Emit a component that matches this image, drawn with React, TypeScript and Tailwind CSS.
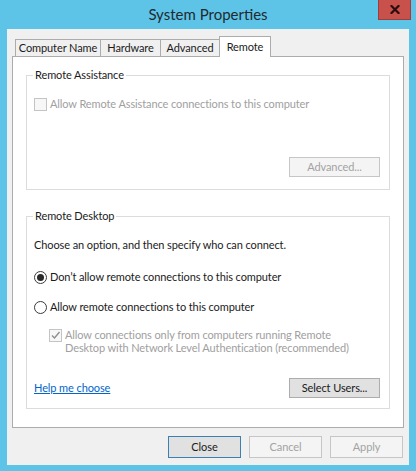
import React from "react";

function CheckBox({ checked = false }: { checked?: boolean }) {
  return (
    <span className="flex h-[13px] w-[13px] shrink-0 items-center justify-center border border-[#c4c4c4] bg-[#f7f7f7]">
      {checked && (
        <svg width="11" height="11" viewBox="0 0 11 11">
          <polyline points="2,5.5 4.5,8 9.5,2" fill="none" stroke="#8e8e8e" strokeWidth="1.4" />
        </svg>
      )}
    </span>
  );
}

function Radio({ checked = false }: { checked?: boolean }) {
  return (
    <span className="flex h-[13px] w-[13px] shrink-0 items-center justify-center rounded-full border border-[#3a3a3a] bg-white">
      {checked && <span className="h-[7px] w-[7px] rounded-full bg-[#2a2a2a]" />}
    </span>
  );
}

function Tab({ label, active = false, w }: { label: string; active?: boolean; w: string }) {
  if (active) {
    return (
      <div
        className={`relative z-10 -mb-px flex h-[21px] items-start justify-center border border-b-0 border-[#acacac] bg-white pt-[3px] ${w}`}
      >
        {label}
      </div>
    );
  }
  return (
    <div
      className={`-mr-px flex h-[17px] items-center justify-center border border-b-0 border-[#acacac] bg-[#f0f0f0] ${w}`}
    >
      {label}
    </div>
  );
}

export default function App() {
  return (
    <div className="flex h-[471px] w-[416px] flex-col whitespace-nowrap bg-[#5ec4e7] font-[Lato,'Liberation_Sans',sans-serif] text-[11px] leading-[14px] tracking-[-0.1px] text-[#1b1b1b]">
      {/* caption bar */}
      <div className="relative flex h-[29px] shrink-0 items-center justify-center pb-[1px] text-[15px] tracking-normal text-[#1f2a30]">
        System Properties
        <div className="absolute right-[5px] top-0 flex h-[20px] w-[33px] items-center justify-center border border-t-0 border-[#9c3f3b] bg-[#c9514c]">
          <svg width="10" height="9" viewBox="0 0 10 9">
            <path d="M1.5 1 L8.5 8 M8.5 1 L1.5 8" stroke="#2a0d0c" strokeWidth="2.2" strokeLinecap="square" />
          </svg>
        </div>
      </div>

      {/* client area */}
      <div className="mx-[7px] flex h-[436px] flex-col bg-[#f0f0f0] pt-[7px]">
        {/* tab strip */}
        <div className="flex h-[20px] items-end pl-[8px]">
          <Tab label="Computer Name" w="w-[86px]" />
          <Tab label="Hardware" w="w-[61px]" />
          <Tab label="Advanced" w="w-[60px]" />
          <Tab label="Remote" active w="w-[52px]" />
        </div>

        {/* tab page */}
        <div className="mx-[5px] flex h-[372px] flex-col border border-[#acacac] bg-white px-[13px] pt-[11px]">
          {/* Remote Assistance group */}
          <fieldset className="border border-[#dcdcdc]">
            <legend className="ml-[6px] px-[2px] leading-[14px]">Remote Assistance</legend>
            <div className="flex flex-col pb-[12px] pl-[7px] pr-[9px] pt-[15px]">
              <div className="flex h-[14px] items-center gap-[3px] text-[#a0a0a0]">
                <CheckBox />
                <span>Allow Remote Assistance connections to this computer</span>
              </div>
              <div className="mt-[46px] flex justify-end">
                <div className="flex h-[20px] w-[91px] items-center justify-center border border-[#c6c6c6] bg-[#f4f4f4] text-[#a3a3a3]">
                  Advanced...
                </div>
              </div>
            </div>
          </fieldset>

          {/* Remote Desktop group */}
          <fieldset className="mt-[19px] border border-[#dcdcdc]">
            <legend className="ml-[6px] px-[2px] leading-[14px]">Remote Desktop</legend>
            <div className="flex flex-col pb-[10px] pl-[7px] pr-[9px] pt-[15px]">
              <div className="h-[14px]">Choose an option, and then specify who can connect.</div>
              <div className="mt-[18px] flex h-[14px] items-center gap-[3px]">
                <Radio checked />
                <span>Don’t allow remote connections to this computer</span>
              </div>
              <div className="mt-[16px] flex h-[14px] items-center gap-[3px]">
                <Radio />
                <span>Allow remote connections to this computer</span>
              </div>
              <div className="mt-[14px] flex items-start gap-[3px] pl-[15px] leading-[13px] text-[#a0a0a0]">
                <span className="mt-[1px]">
                  <CheckBox checked />
                </span>
                <span>
                  Allow connections only from computers running Remote
                  <br />
                  Desktop with Network Level Authentication (recommended)
                </span>
              </div>
              <div className="mt-[24px] flex h-[20px] items-center justify-between">
                <span className="text-[#0066cc] underline decoration-[#0066cc]">Help me choose</span>
                <div className="flex h-[20px] w-[91px] items-center justify-center border border-[#adadad] bg-[#e1e1e1]">
                  Select Users...
                </div>
              </div>
            </div>
          </fieldset>
        </div>

        {/* dialog buttons */}
        <div className="mt-[8px] flex justify-end gap-[8px] pr-[6px]">
          <div className="flex h-[22px] w-[73px] items-center justify-center border border-[#3c7fb1] bg-[#e1e1e1]">
            Close
          </div>
          <div className="flex h-[22px] w-[73px] items-center justify-center border border-[#c6c6c6] bg-[#f4f4f4] text-[#a3a3a3]">
            Cancel
          </div>
          <div className="flex h-[22px] w-[73px] items-center justify-center border border-[#c6c6c6] bg-[#f4f4f4] text-[#a3a3a3]">
            Apply
          </div>
        </div>
      </div>
    </div>
  );
}
